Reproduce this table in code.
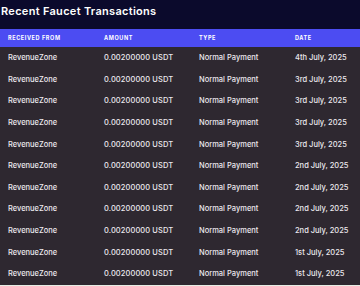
import React from 'react';

type Tx = {
    from: string;
    amount: string;
    type: string;
    date: string;
};

const transactions: Tx[] = [
    { from: 'RevenueZone', amount: '0.00200000 USDT', type: 'Normal Payment', date: '4th July, 2025' },
    { from: 'RevenueZone', amount: '0.00200000 USDT', type: 'Normal Payment', date: '3rd July, 2025' },
    { from: 'RevenueZone', amount: '0.00200000 USDT', type: 'Normal Payment', date: '3rd July, 2025' },
    { from: 'RevenueZone', amount: '0.00200000 USDT', type: 'Normal Payment', date: '3rd July, 2025' },
    { from: 'RevenueZone', amount: '0.00200000 USDT', type: 'Normal Payment', date: '3rd July, 2025' },
    { from: 'RevenueZone', amount: '0.00200000 USDT', type: 'Normal Payment', date: '2nd July, 2025' },
    { from: 'RevenueZone', amount: '0.00200000 USDT', type: 'Normal Payment', date: '2nd July, 2025' },
    { from: 'RevenueZone', amount: '0.00200000 USDT', type: 'Normal Payment', date: '2nd July, 2025' },
    { from: 'RevenueZone', amount: '0.00200000 USDT', type: 'Normal Payment', date: '2nd July, 2025' },
    { from: 'RevenueZone', amount: '0.00200000 USDT', type: 'Normal Payment', date: '1st July, 2025' },
    { from: 'RevenueZone', amount: '0.00200000 USDT', type: 'Normal Payment', date: '1st July, 2025' },
];

const cols = 'grid grid-cols-[96px_95px_96px_1fr] pl-2';

const App: React.FC = () => {
    return (
        <div className="w-[360px] h-[286px] overflow-hidden bg-[#e6ede4] font-['Inter',sans-serif]">
            <div className="bg-[#0b0a2c] h-[29px] pl-px pt-[3px]">
                <h2 className="text-[11px] font-semibold text-white tracking-[0.3px] leading-[16px]">
                    Recent Faucet Transactions
                </h2>
            </div>
            <div className="bg-[#2e2830]">
                <div className={`${cols} bg-[#4c4cf2] h-[18px] items-center text-[5.5px] font-bold tracking-[0.6px] text-white`}>
                    <div>RECEIVED FROM</div>
                    <div>AMOUNT</div>
                    <div>TYPE</div>
                    <div>DATE</div>
                </div>
                {transactions.map((tx, index) => (
                    <div
                        key={index}
                        className={`${cols} h-[21.6px] items-center text-[7.5px] font-medium text-[#ece8ee]`}
                    >
                        <div>{tx.from}</div>
                        <div className="tracking-[0.1px]">{tx.amount}</div>
                        <div>{tx.type}</div>
                        <div>{tx.date}</div>
                    </div>
                ))}
            </div>
        </div>
    );
};

export default App;
